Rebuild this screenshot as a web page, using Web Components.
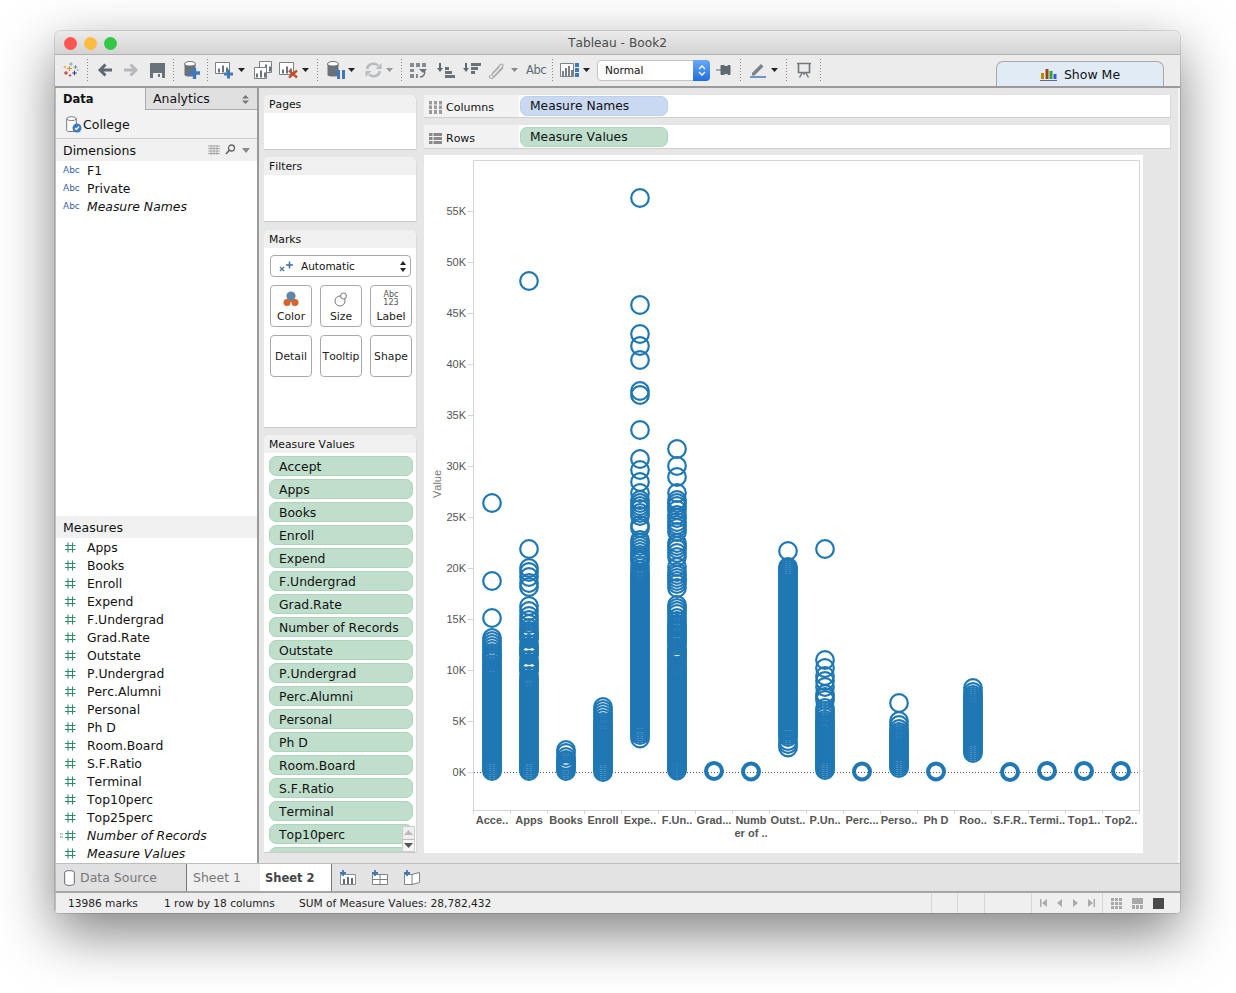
<!DOCTYPE html>
<html><head><meta charset="utf-8"><title>Tableau - Book2</title>
<style>
html,body{margin:0;background:#fff}
body{padding:31px 0 0 55px;height:962px;overflow:hidden;font-family:"DejaVu Sans",sans-serif;font-size:12px;color:#111;font-kerning:none}
</style></head><body>
<tb-window>
  <tb-titlebar>Tableau - Book2</tb-titlebar>
  <tb-toolbar></tb-toolbar>
  <tb-main>
    <tb-datapane slot="left"></tb-datapane>
    <tb-cards slot="mid"></tb-cards>
    <tb-shelf slot="right" label="Columns" kind="cols" pill="Measure Names" style="height:23px"></tb-shelf>
    <tb-shelf slot="right" label="Rows" kind="rows" pill="Measure Values" style="height:24px;margin-top:7px"></tb-shelf>
    <tb-chart slot="right"></tb-chart>
  </tb-main>
  <tb-tabs></tb-tabs>
  <tb-status></tb-status>
</tb-window>
<script>
const def=(name,css,html,init)=>customElements.define(name,class extends HTMLElement{
  constructor(){super();const s=this.attachShadow({mode:'open'});this._h=html;this._c=css;}
  connectedCallback(){ if(this._i)return;this._i=1;const h=this._h;
    this.shadowRoot.innerHTML='<style>'+this._c+'</style>'+(typeof h==='function'?h(this):h);
    if(init)init(this,this.shadowRoot); }
});
const G='#5f6972',B='#3f78b8';
const svg=(w,h,b,st='')=>`<svg width="${w}" height="${h}" viewBox="0 0 ${w} ${h}" style="${st}">${b}</svg>`;
const plus=(x,y,c,l=3,t=1.2)=>`<path d="M${x-l} ${y}H${x+l}M${x} ${y-l}V${y+l}" stroke="${c}" stroke-width="${t}" fill="none"/>`;
const bars=(x,y,c='#6b747c')=>`<path d="M${x} ${y+9}V${y+5}h2v4zM${x+4} ${y+9}V${y+2}h2v7zM${x+8} ${y+9}V${y+4}h2v5z" fill="${c}"/>`;
const icons={
 logo:svg(16,16,plus(6.500,6.500,'#e8862b',2.600,1.100)+plus(8,2,'#6a96a8',1.600,.9)+plus(12.500,5,'#5a8ea6',1.800,1)+plus(3,11,'#c72037',2,1)+plus(11.500,11,'#1f447a',2.200,1.100)+plus(7,13.500,'#c72037',1.300,.8)+plus(1.800,5,'#e8a02b',1.300,.8)+plus(14.800,8,'#8ab',1,.7)),
 back:svg(16,14,`<path d="M15 7H4M8.500 1.500L3 7l5.500 5.500" fill="none" stroke="${G}" stroke-width="3"/>`),
 fwd:svg(16,14,`<path d="M1 7h11M7.500 1.500L13 7l-5.500 5.500" fill="none" stroke="#b4b8bc" stroke-width="3"/>`),
 save:svg(15,15,`<path d="M0 0h15v15H0z" fill="#6a7279"/><path d="M3 10h9v5H3z" fill="#eee"/><path d="M8 11h2v3H8z" fill="#6a7279"/>`),
 db:svg(16,18,`<ellipse cx="6" cy="3" rx="5.500" ry="2.500" fill="#fff" stroke="#6a7279"/><path d="M.5 3v11c1 2 10 2 11 0V3c-1 2-10 2-11 0z" fill="#6a7279"/><path d="M5 12h11M10.500 7v11" stroke="${B}" stroke-width="3.400"/>`),
 sheet:svg(18,18,`<path d="M.5 1.500h14v11H.5z" fill="#fff" stroke="#7a8288"/>`+bars(3,2.500)+`<path d="M9 13h9M13.500 8.500v9" stroke="${B}" stroke-width="3"/>`),
 dup:svg(18,18,`<path d="M5.500.5h12v11h-12z" fill="#fff" stroke="#7a8288"/>`+bars(7,1.500)+`<path d="M.5 6.500h12v11H.5z" fill="#fff" stroke="#7a8288"/>`+bars(2,7.500)),
 clear:svg(19,18,`<path d="M.5 1.500h14v12H.5z" fill="#fff" stroke="#7a8288"/>`+bars(3,3.500)+`<path d="M10 9.500l8 7M18 9.500l-8 7" stroke="#c0512f" stroke-width="2.400"/>`),
 pause:svg(18,18,`<ellipse cx="6" cy="3" rx="5.500" ry="2.500" fill="#fff" stroke="#6a7279"/><path d="M.5 3v11c1 2 10 2 11 0V3c-1 2-10 2-11 0z" fill="#6a7279"/><path d="M10 9h3v9h-3zM15 9h3v9h-3z" fill="${B}"/>`),
 refresh:svg(17,16,`<path d="M2 7a6.500 6 0 0 1 11-3.500M15 9A6.500 6 0 0 1 4 12.500" fill="none" stroke="#b8bcc0" stroke-width="2.600"/><path d="M16.500 1v6h-6zM.5 15V9h6z" fill="#b8bcc0"/>`),
 swap:svg(17,17,`<path d="M0 1h4v4H0zM6 1h4v4H6zM12 1h4v4h-4zM0 7h4v3H0zM0 12h4v4H0zM6 12h2v4H6z" fill="#848b91"/><path d="M14 8a4.500 4.500 0 0 1-4 7" fill="none" stroke="#6a7279" stroke-width="1.500"/><path d="M9 8h8l-4 4z" fill="#6a7279" transform="translate(0,-1)"/>`),
 sortA:svg(18,15,`<path d="M3 0v7" stroke="${G}" stroke-width="2"/><path d="M0 5h6L3 9z" fill="${G}"/><path d="M8 4h4v3H8zM8 8h7v3H8zM8 12h10v3H8z" fill="#6a7279"/>`),
 sortD:svg(18,15,`<path d="M3 0v7" stroke="${G}" stroke-width="2"/><path d="M0 5h6L3 9z" fill="${G}"/><path d="M8 0h10v3H8zM8 4h7v3H8zM8 8h4v3H8z" fill="#6a7279"/>`),
 clip:svg(17,17,`<path d="M4 12L12 3c2-2 4 0 2.500 2L7 13.500c-1.500 1.500-3.500.5-3-1L11 5M2 13c-2 3 2 5 4 2l9-9" fill="none" stroke="#a9aeb2" stroke-width="1.200"/>`),
 chart:svg(20,16,`<path d="M.5 1.500h13v13H.5z" fill="#fff" stroke="#7a8288"/><path d="M2 14V9h2v5zM5 14V6h2v8zM8 14V4h2v10zM11 14V8h2v6z" fill="#7a8288"/><path d="M15 1h4v4h-4zM15 6h4v4h-4zM15 11h4v4h-4z" fill="${B}"/>`),
 pin:svg(15,12,`<path d="M0 6h5M5 1.500h2l3 1h2v-1h2v9h-2v-1h-2l-3 1H5z" fill="${G}" stroke="${G}"/>`),
 high:svg(16,16,`<path d="M2 11L11 2l2.500 2.500-9 9H2z" fill="#7a8288"/><path d="M0 15h16" stroke="${B}" stroke-width="1.600"/>`),
 pres:svg(16,16,`<path d="M1 1.500h14M2.500 2v8.500h11V2" fill="none" stroke="#6f777e" stroke-width="1.600"/><path d="M6 11l-2.500 4.500M10 11l2.500 4.500M8 11v2" stroke="#6f777e" stroke-width="1.500"/>`),
 bars3:svg(17,14,`<path d="M1 12V6h3v6z" fill="#b98a00"/><path d="M5.500 12V2h3v10z" fill="#a4420d"/><path d="M9.500 12V4h3v8z" fill="#2ea23a"/><path d="M13.500 12V7h3v5z" fill="#3a56e0"/><path d="M0 13.500h17" stroke="#667"/>`),
 hash:svg(13,13,`<path d="M4 1.500v10M8.500 1.500v10M1 4.500h10.500M1 8.500h10.500" stroke="#2e8a6b" stroke-width="1.100" fill="none"/>`),
 hashc:svg(17,13,`<path d="M0 5h3M0 8h3" stroke="#2e8a6b" stroke-width="1" stroke-dasharray="1.500 .7"/><path d="M8 1.500v10M12.500 1.500v10M5 4.500h10.500M5 8.500h10.500" stroke="#2e8a6b" stroke-width="1.100" fill="none"/>`)
};
const caret=(c='#222')=>`<svg width="7" height="4" viewBox="0 0 7 4"><path d="M0 0h7L3.500 4z" fill="${c}"/></svg>`;
const sep=ml=>`<i class="sep" style="margin-left:${ml}px"></i>`;
const ic=(n,ml)=>`<span class="it" style="margin-left:${ml}px">${icons[n]}</span>`;
const ca=(ml,c)=>`<span class="it" style="margin-left:${ml}px">${caret(c)}</span>`;

def('tb-window',`:host{display:flex;flex-direction:column;width:1125px;height:882px;box-sizing:border-box;border-radius:6px 6px 4px 4px;overflow:hidden;background:#ececec}`,`<slot></slot>`,h=>{h.style.boxShadow='0 20px 55px rgba(0,0,0,.5),0 0 0 1px rgba(0,0,0,.12)';});

def('tb-titlebar',`:host{display:flex;flex:none;height:24px;box-sizing:border-box;padding-top:1px;position:relative;align-items:center;justify-content:center;background:linear-gradient(#ebebeb,#d3d3d3);border-bottom:1px solid #b1b1b1;font-size:12.200px;color:#4c4c4c}
 .l{position:absolute;left:9px;top:6px;display:flex;gap:7px}
 .l b{width:13px;height:13px;border-radius:50%}`,
 `<div class="l"><b style="background:#fc5753"></b><b style="background:#fdbc40"></b><b style="background:#33c748"></b></div><slot></slot>`);

def('tb-toolbar',`:host{display:flex;flex:none;height:33px;box-sizing:border-box;padding:0 0 1px 8px;align-items:center;background:#ececec;border-bottom:2px solid #9a9a9a;position:relative}
 .it{display:flex;align-items:center;flex:none}
 .sep{width:1px;height:23px;flex:none;background:repeating-linear-gradient(#888 0 1px,transparent 1px 3px)}
 .abc{font:11.500px "DejaVu Sans";color:#5f6972;margin-left:8px;width:21px;flex:none;white-space:nowrap;letter-spacing:-.4px}
 .sel{margin-left:7px;width:113px;height:21px;flex:none;box-sizing:border-box;background:#fff;border:1px solid #c4c4c4;border-radius:4px;display:flex;align-items:center;padding-left:7px;font-size:10.600px;position:relative;color:#111}
 .sel i{position:absolute;right:-1px;top:-1px;bottom:-1px;width:17px;border-radius:0 4px 4px 0;background:linear-gradient(#6aa8f5,#1f6fe0);display:flex;align-items:center;justify-content:center}
 .show{margin-left:auto;margin-right:16px;align-self:flex-end;margin-bottom:-1px;width:168px;height:25px;box-sizing:border-box;background:#e0ebf5;border:1px solid #a8a8a8;border-bottom:0;border-radius:7px 7px 0 0;display:flex;align-items:center;justify-content:center;gap:7px;font-size:12.500px;color:#111}`,
 ()=>ic('logo',0)+sep(8)+ic('back',9)+ic('fwd',10)+ic('save',11)+sep(8)+ic('db',10)+sep(7)+ic('sheet',7)+ca(5)+ic('dup',9)+ic('clear',7)+ca(4)+sep(8)+ic('pause',9)+ca(3)+ic('refresh',10)+ca(4,'#999')+sep(8)+ic('swap',8)+ic('sortA',10)+ic('sortD',8)+ic('clip',7)+ca(6,'#888')+`<span class="abc">Abc</span>`+sep(5)+ic('chart',7)+ca(3)+`<div class="sel">Normal<i><svg width="8" height="13" viewBox="0 0 8 13"><path d="M1 5l3-3 3 3M1 8l3 3 3-3" fill="none" stroke="#fff" stroke-width="1.300"/></svg></i></div>`+ic('pin',6)+sep(9)+ic('high',9)+ca(5)+sep(8)+ic('pres',9)+sep(8)+`<div class="show">${icons.bars3}<span>Show Me</span></div>`);

def('tb-main',`:host{display:flex;flex:none;height:775px;background:#e6e6e6;border-right:2px solid #f4f4f4;border-left:1px solid #bbb}
 .l{flex:none;display:flex;width:201px;border-right:2px solid #9a9a9a}
 .m{flex:none;width:153px;margin:7px 0 0 5px}
 .r{flex:none;width:747px;margin:7px 0 0 7px;display:flex;flex-direction:column}`,
 `<div class="l"><slot name="left"></slot></div><div class="m"><slot name="mid"></slot></div><div class="r"><slot name="right"></slot></div>`);

const dims=[['F1'],['Private'],['Measure Names',1]];
const meas=[['Apps'],['Books'],['Enroll'],['Expend'],['F.Undergrad'],['Grad.Rate'],['Outstate'],['P.Undergrad'],['Perc.Alumni'],['Personal'],['Ph D'],['Room.Board'],['S.F.Ratio'],['Terminal'],['Top10perc'],['Top25perc'],['Number of Records',1,1],['Measure Values',1]];
def('tb-field',`:host{display:flex;height:18px;align-items:center;position:relative;padding-left:31px;font-size:12.400px;color:#111;white-space:nowrap}
 :host([em]){font-style:italic}
 .i{position:absolute;left:7px;top:0;height:18px;display:flex;align-items:center;font:9px "DejaVu Sans";color:#3c62a0;font-style:normal}`,
 h=>`<span class="i">${h.getAttribute('icon')==='abc'?'Abc':h.getAttribute('icon')==='hc'?`<span style="margin-left:-3px;display:flex">${icons.hashc}</span>`:`<span style="margin-left:1px;display:flex">${icons.hash}</span>`}</span><slot></slot>`);
def('tb-datapane',`:host{display:flex;flex-direction:column;width:100%;background:#fff;overflow:hidden}
 .tabs{display:flex;height:22px;flex:none;background:#f2f2f2}
 .tabs div{display:flex;align-items:center;font-size:12.500px}
 .d{width:89px;padding-left:7px;box-sizing:border-box;font-weight:bold;font-size:11.500px!important}
 .a{flex:1;background:#e0e0e0;border-left:1px solid #aaa;border-bottom:1px solid #aaa;box-sizing:border-box;padding-left:7px;position:relative}
 .a svg{position:absolute;right:8px;top:7px}
 .c{height:29px;flex:none;box-sizing:border-box;background:#f2f2f2;border-bottom:1px solid #ccc;display:flex;align-items:center;padding-left:10px;font-size:12.500px;gap:1px}
 .h{height:22px;flex:none;background:#f0f0f0;display:flex;align-items:center;padding:0 7px;font-size:12.500px;position:relative}
 .h span{position:absolute;display:flex;top:6px}
 .fl{flex:1}`,
 `<div class="tabs"><div class="d">Data</div><div class="a">Analytics<svg width="7" height="9" viewBox="0 0 7 9"><path d="M0 3.500h7L3.500 0zM0 5.500h7L3.500 9z" fill="#777"/></svg></div></div>
 <div class="c"><svg width="16" height="17" viewBox="0 0 16 17"><path d="M.7 3c0-3 9.600-3 9.600 0v11c0 1-1 1.500-2 1.500H2.700c-1 0-2-.5-2-1.500z" fill="#fff" stroke="#777"/><path d="M.7 3c1 2 8.600 2 9.600 0" fill="none" stroke="#777"/><circle cx="11" cy="12" r="4.500" fill="#3a78c4"/><path d="M9 12l1.500 1.500L13 10.500" fill="none" stroke="#fff" stroke-width="1.200"/></svg><span>College</span></div>
 <div class="h">Dimensions<span style="left:152px"><svg width="12" height="10" viewBox="0 0 12 10"><path d="M0 1h12M0 3.500h12M0 6h12M0 8.500h12M3 0v10M6 0v10M9 0v10" stroke="#999" stroke-width=".8"/></svg></span><span style="left:169px;top:5px"><svg width="11" height="11" viewBox="0 0 11 11"><circle cx="6.500" cy="4" r="3" fill="none" stroke="#666" stroke-width="1.300"/><path d="M4.500 6L1 10" stroke="#666" stroke-width="1.600"/></svg></span><span style="left:186px;top:9px"><svg width="8" height="5" viewBox="0 0 8 5"><path d="M0 0h8L4 5z" fill="#888"/></svg></span></div>
 <div class="fl">${dims.map(d=>`<tb-field icon="abc"${d[1]?' em':''}>${d[0]}</tb-field>`).join('')}</div>
 <div class="h">Measures</div>
 <div style="flex:none;margin-bottom:1px">${meas.map(d=>`<tb-field icon="${d[2]?'hc':'h'}"${d[1]?' em':''}>${d[0]}</tb-field>`).join('')}</div>`);

def('tb-card',`:host{display:flex;flex-direction:column;position:relative;box-sizing:border-box;background:#fff;border-radius:6px 6px 0 0;overflow:hidden;border-bottom:1px solid #c9c9c9;border-right:1px solid #dadada;flex:none}
 .h{height:18px;flex:none;background:#f0f0f0;display:flex;align-items:center;padding-left:5px;font-size:10.800px;color:#111}
 .b{flex:1;min-height:0;overflow:hidden}`,
 h=>`<div class="h">${h.getAttribute('title')}</div><div class="b"><slot></slot></div>`);
def('tb-pill',`:host{display:flex;flex:none;align-items:center;box-sizing:border-box;height:20px;padding-left:9px;background:#bfdecb;border:1px solid #aed4bc;border-radius:7px;font-size:12.400px;color:#111;white-space:nowrap}`,`<slot></slot>`);
def('tb-mark',`:host{display:flex;flex-direction:column;align-items:center;justify-content:center;box-sizing:border-box;width:42px;height:42px;padding-top:1px;border:1px solid #aaa;border-radius:4px;background:#fff;font-size:10.800px;color:#222;gap:2px;overflow:hidden}
 ::slotted(div){height:17px;display:flex;align-items:center;justify-content:center;font-size:8px;line-height:8px;text-align:center;color:#555}`,`<slot name="i"></slot><slot></slot>`);
const mv=['Accept','Apps','Books','Enroll','Expend','F.Undergrad','Grad.Rate','Number of Records','Outstate','P.Undergrad','Perc.Alumni','Personal','Ph D','Room.Board','S.F.Ratio','Terminal','Top10perc','Top25perc'];
def('tb-cards',`:host{display:flex;flex-direction:column;height:100%}
 .sel{margin:7px 5px 0 6px;height:22px;box-sizing:border-box;border:1px solid #aaa;border-radius:4px;display:flex;align-items:center;padding-left:8px;font-size:10.500px;gap:6px;position:relative}
 .sel svg.ud{position:absolute;right:4px;top:5px}
 .g{display:grid;grid-template-columns:repeat(3,42px);gap:8px;margin:8px 0 0 6px}
 .l{display:flex;flex-direction:column;gap:3px;margin:3px 0 0 5px;width:144px}
 .sb{position:absolute;right:1px;bottom:0;width:13px;height:26px;background:#eee;border:1px solid #ccc;box-sizing:border-box;display:flex;flex-direction:column}
 .sb div{flex:1;display:flex;align-items:center;justify-content:center}
 .sb div+div{border-top:1px solid #bbb;background:#f6f6f6}`,
 `<tb-card title="Pages" style="height:55px"></tb-card>
  <tb-card title="Filters" style="height:65px;margin-top:7px"></tb-card>
  <tb-card title="Marks" style="height:198px;margin-top:8px">
   <div class="sel"><svg width="16" height="11" viewBox="0 0 16 11"><path d="M1 6l4 4M5 6l-4 4" stroke="#5580a8" stroke-width="1.500"/><path d="M7 4h7M10.500 .5v7" stroke="#3a70a8" stroke-width="1.500"/></svg>Automatic<svg class="ud" width="6" height="11" viewBox="0 0 6 11"><path d="M0 4h6L3 0zM0 7h6l-3 4z" fill="#222"/></svg></div>
   <div class="g">
    <tb-mark><div slot="i"><svg width="16" height="16" viewBox="0 0 16 16"><circle cx="4" cy="11.500" r="3.500" fill="#d9642a"/><circle cx="12" cy="11.500" r="3.500" fill="#d9642a"/><path d="M3 8h10v3H3z" fill="#d9642a"/><circle cx="8" cy="5" r="4.600" fill="#5d87ad"/></svg></div>Color</tb-mark>
    <tb-mark><div slot="i"><svg width="14" height="15" viewBox="0 0 14 15"><circle cx="6" cy="9" r="5" fill="none" stroke="#777"/><circle cx="9.500" cy="4" r="3" fill="#fff" stroke="#777"/></svg></div>Size</tb-mark>
    <tb-mark><div slot="i">Abc<br>123</div>Label</tb-mark>
    <tb-mark>Detail</tb-mark><tb-mark>Tooltip</tb-mark><tb-mark>Shape</tb-mark>
   </div>
  </tb-card>
  <tb-card title="Measure Values" style="height:418px;margin-top:7px">
   <div class="l">${mv.map(m=>`<tb-pill>${m}</tb-pill>`).join('')}</div>
   <div class="sb"><div><svg width="9" height="5" viewBox="0 0 9 5"><path d="M0 5h9L4.500 0z" fill="#bbb"/></svg></div><div><svg width="9" height="5" viewBox="0 0 9 5"><path d="M0 0h9L4.500 5z" fill="#555"/></svg></div></div>
  </tb-card>`);

def('tb-shelf',`:host{display:flex;flex:none;box-sizing:border-box;background:#fff;border-bottom:1px solid #cfcfcf;border-right:1px solid #dadada}
 .n{width:95px;flex:none;background:#f2f2f2;display:flex;align-items:center;font-size:11px;color:#111;padding:2px 0 0 5px;box-sizing:border-box;gap:4px}
 .p{flex:none;width:148px;height:20px;margin:1px 0 0 1px;box-sizing:border-box;display:flex;align-items:center;padding-left:9px;border-radius:7px;font-size:12.300px;color:#111}
 :host([kind=rows]) .n{padding-top:3px}
 :host([kind=rows]) .p{margin-top:2px}
 .cols{background:#c9d9f2;border:1px solid #bcd0ee}.rows{background:#bfdecb;border:1px solid #aed4bc}`,
 h=>{const c=h.getAttribute('kind');return `<div class="n">${c==='cols'?'<svg width="13" height="13" viewBox="0 0 13 13"><path d="M0 0h3v13H0zM5 0h3v13H5zM10 0h3v13h-3z" fill="#9a9a9a"/><path d="M0 4h13M0 8.500h13" stroke="#f2f2f2"/></svg>':'<svg width="13" height="13" viewBox="0 0 13 13"><path d="M0 1h13v3H0zM0 5h13v3H0zM0 9h13v3H0z" fill="#8a8a8a"/><path d="M4 0v13" stroke="#f2f2f2"/></svg>'}<span>${h.getAttribute('label')}</span></div><div class="p ${c}">${h.getAttribute('pill')}</div>`});

const rng=(a,b,s=2)=>{const r=[];for(let y=a;y<=b;y+=s)r.push(y);return r;};
const cols=[
 ['Acce..',[503,581,618,638,641,644,647,650,653,...rng(655,661),664.500,...rng(667,772)]],
 ['Apps',[281,549,568,572,577,583,587,606,611,616,620,624,628,...rng(631,640),644,...rng(647,656),660,...rng(663,672),676,...rng(679,772)]],
 ['Books',[750,753,757,760,...rng(761,771.500)]],
 ['Enroll',[707,710,713,716,719,...rng(722,773)]],
 ['Expe..',[198,305,334,346,360,391,395,430,459,470,482,493,500,503,506,509,513,516,525,528,540,543,546,549,552,...rng(555,562),566,570,...rng(573,735),738.500]],
 ['F.Un..',[449,466,477,493,500,503,506,510,515,518,522,525,528,532,543,546,549,553,557,567,572,575,578,581,584,588,605,608,611,614,618,621,...rng(624,645.500),...rng(648.600,663),...rng(666.500,771)]],
 ['Grad...',[771],1],
 ['Numb',[771.500],1],
 ['Outst..',[551,...rng(567,737),741,744,747.500]],
 ['P.Un..',[549,660,668,676,681,687,694,697,700,708,711,714,717,...rng(720,771)]],
 ['Perc...',[771.500],1],
 ['Perso..',[703,721,725,729,...rng(732,769)]],
 ['Ph D',[771.500],1],
 ['Roo..',[688,692,...rng(695,753)]],
 ['S.F.R..',[772],1],
 ['Termi..',[771],1],
 ['Top1..',[771],1],
 ['Top2..',[771],1]
];
def('tb-chart',`:host{display:block;flex:none;width:719px;height:698px;margin-top:6px;background:#fff}
 svg{display:block}`,
 ()=>{
  const ox=424,oy=155;let s='';
  const X=i=>492+37*i-ox;
  s+=`<path d="M${473.500-ox} ${160-oy}V${810.500-oy}H${1139.500-ox}V${160.500-oy}H${473.500-ox}" fill="none" stroke="#d4d4d4"/>`;
  for(let i=0;i<=18;i++){const x=473.500+37*i-ox;s+=`<path d="M${x} ${810-oy}v4" stroke="#d4d4d4"/>`;}
  s+=`<path d="M${474-ox} ${772.500-oy}H${1139-ox}" stroke="#555" stroke-dasharray="1 2"/>`;
  for(let k=0;k<=55;k+=5){const y=772-k*10.2-oy;
   s+=`<path d="M${468-ox} ${Math.round(y)+.5}h5" stroke="#d4d4d4"/><text x="${466-ox}" y="${y+4}" text-anchor="end" font-family="Liberation Sans" font-size="11" fill="#555">${k}K</text>`;}
  s+=`<text transform="translate(${441-ox},${484-oy}) rotate(-90)" text-anchor="middle" font-family="Liberation Sans" font-size="11" fill="#777">Value</text>`;
  cols.forEach((c,i)=>{
   const r=c[2]?8:8.800,w=c[2]?4:2.200;
   c[1].forEach(y=>{s+=`<circle cx="${X(i)}" cy="${y-oy}" r="${r}" fill="none" stroke="#1f77b4" stroke-width="${w}"/>`;});
   s+=`<text x="${X(i)}" y="${824-oy}" text-anchor="middle" font-family="Liberation Sans" font-weight="bold" font-size="11" fill="#555">${c[0]}</text>`;
   if(c[0]==='Numb')s+=`<text x="${X(i)}" y="${837-oy}" text-anchor="middle" font-family="Liberation Sans" font-weight="bold" font-size="11" fill="#555">er of ..</text>`;
  });
  return `<svg width="719" height="698" viewBox="0 0 719 698">${s}</svg>`;
 });

def('tb-tabs',`:host{display:flex;flex:none;height:30px;box-sizing:border-box;background:#e3e3e3;border-top:1px solid #bdbdbd;border-bottom:2px solid #a6a6a6;border-left:1px solid #bbb;font-size:12.500px;color:#777}
 div{display:flex;align-items:center;box-sizing:border-box;border-right:1px solid #777}
 .ds{width:131px;padding-left:8px;gap:5px;background:#e0e0e0}
 .s1{width:73px;padding-left:6px;background:#f0f0f0;border-right:0}
 .s2{width:72px;padding-left:5px;background:#fff;font-weight:bold;font-size:11.500px;color:#444}
 .ic{border:0;gap:16px;padding-left:8px}`,
 `<div class="ds"><svg width="11" height="16" viewBox="0 0 11 16"><path d="M.7 2.500c0-2.500 9.600-2.500 9.600 0v11c0 2.500-9.600 2.500-9.600 0z" fill="#fff" stroke="#667"/></svg>Data Source</div><div class="s1">Sheet 1</div><div class="s2">Sheet 2</div>
 <div class="ic"><svg width="16" height="15" viewBox="0 0 16 15"><path d="M.5 4.500h15v10H.5z" fill="#fff" stroke="#8a9096"/><path d="M3 14V9h2v5zM7 14V7h2v7zM11 14v-6h2v6z" fill="#5e6b76"/><path d="M0 3h6M3 0v6" stroke="${B}" stroke-width="1.800"/></svg>
 <svg width="16" height="15" viewBox="0 0 16 15"><path d="M.5 4.500h15v10H.5zM.5 9.500h15M8 4.500v10" fill="#fff" stroke="#7c8287"/><path d="M0 3h6M3 0v6" stroke="${B}" stroke-width="1.800"/></svg>
 <svg width="16" height="15" viewBox="0 0 16 15"><path d="M.5 4.500H8v10H.5zM8 4.500l7.500-2v10L8 14.500" fill="#fff" stroke="#7c8287"/><path d="M0 3h6M3 0v6" stroke="${B}" stroke-width="1.800"/></svg></div>`);

def('tb-status',`:host{display:flex;flex:none;height:20px;align-items:center;background:#efefef;font-size:10.600px;color:#222;border-left:1px solid #bbb;position:relative}
 span{flex:none;white-space:nowrap}
 .cell{height:100%;border-left:1px solid #d6d6d6;box-sizing:border-box;flex:none;display:flex;align-items:center}`,
 `<span style="margin-left:12px;width:96px">13986 marks</span><span style="width:135px">1 row by 18 columns</span><span style="width:632px">SUM of Measure Values: 28,782,432</span>
 <div class="cell" style="width:26px"></div><div class="cell" style="width:27px"></div><div class="cell" style="width:47px"></div>
 <div class="cell" style="width:71px;gap:9px;padding-left:8px"><svg width="7" height="8" viewBox="0 0 7 8"><path d="M0 0h1.500v8H0zM7 0v8L2 4z" fill="#aaa"/></svg><svg width="7" height="8" viewBox="0 0 7 8"><path d="M6 0v8L1 4z" fill="#aaa"/></svg><svg width="7" height="8" viewBox="0 0 7 8"><path d="M1 0v8l5-4z" fill="#aaa"/></svg><svg width="7" height="8" viewBox="0 0 7 8"><path d="M5.500 0H7v8H5.500zM0 0v8l5-4z" fill="#aaa"/></svg></div>
 <div class="cell" style="flex:1;gap:10px;padding-left:8px"><svg width="11" height="11" viewBox="0 0 11 11"><path d="M0 0h3v3H0zM4 0h3v3H4zM8 0h3v3H8zM0 4h3v3H0zM4 4h3v3H4zM8 4h3v3H8zM0 8h3v3H0zM4 8h3v3H4zM8 8h3v3H8z" fill="#a8a8a8"/></svg><svg width="11" height="11" viewBox="0 0 11 11"><path d="M0 0h11v6H0zM0 7h3v4H0zM4 7h3v4H4zM8 7h3v4H8z" fill="#a8a8a8"/></svg><svg width="11" height="11" viewBox="0 0 11 11"><path d="M0 0h11v11H0z" fill="#4a4a4a"/></svg></div>`);
</script>
</body></html>
